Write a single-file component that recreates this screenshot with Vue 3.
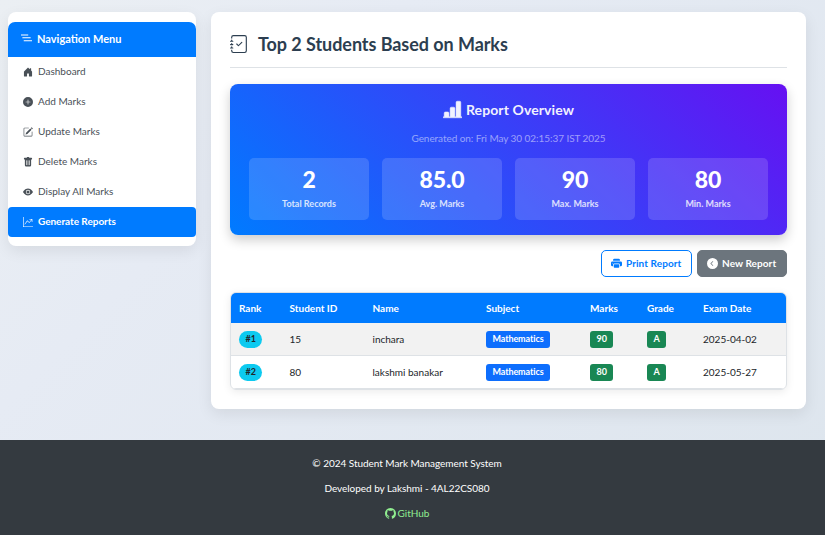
<script setup>
import { h } from 'vue'

const icons = {
  nested: ['M0 2h10.500v1.500H0zM2 6.200h12v1.500H2zM4 10.500h12V12H4z'],
  house: ['M6.5 14.5v-3.505c0-.245.25-.495.5-.495h2c.25 0 .5.25.5.5v3.5a.5.5 0 0 0 .5.5h4a.5.5 0 0 0 .5-.5v-7a.5.5 0 0 0-.146-.354L13 5.793V2.5a.5.5 0 0 0-.5-.5h-1a.5.5 0 0 0-.5.5v1.293L8.354 1.146a.5.5 0 0 0-.708 0l-6 6A.5.5 0 0 0 1.5 7.5v7a.5.5 0 0 0 .5.5h4a.5.5 0 0 0 .5-.5'],
  plus: ['M16 8A8 8 0 1 1 0 8a8 8 0 0 1 16 0M8.5 4.5a.5.5 0 0 0-1 0v3h-3a.5.5 0 0 0 0 1h3v3a.5.5 0 0 0 1 0v-3h3a.5.5 0 0 0 0-1h-3z'],
  pencil: ['M15.502 1.94a.5.5 0 0 1 0 .706L14.459 3.69l-2-2L13.502.646a.5.5 0 0 1 .707 0l1.293 1.293zm-1.75 2.456-2-2L4.939 9.21a.5.5 0 0 0-.121.196l-.805 2.414a.25.25 0 0 0 .316.316l2.414-.805a.5.5 0 0 0 .196-.12l6.813-6.814z', 'M1 13.5A1.5 1.5 0 0 0 2.5 15h11a1.5 1.5 0 0 0 1.5-1.5v-6a.5.5 0 0 0-1 0v6a.5.5 0 0 1-.5.5h-11a.5.5 0 0 1-.5-.5v-11a.5.5 0 0 1 .5-.5H9a.5.5 0 0 0 0-1H2.5A1.5 1.5 0 0 0 1 2.5z'],
  trash: ['M2.5 1a1 1 0 0 0-1 1v1a1 1 0 0 0 1 1H3v9a2 2 0 0 0 2 2h6a2 2 0 0 0 2-2V4h.5a1 1 0 0 0 1-1V2a1 1 0 0 0-1-1H10a1 1 0 0 0-1-1H7a1 1 0 0 0-1 1zm3 4a.5.5 0 0 1 .5.5v7a.5.5 0 0 1-1 0v-7a.5.5 0 0 1 .5-.5M8 5a.5.5 0 0 1 .5.5v7a.5.5 0 0 1-1 0v-7A.5.5 0 0 1 8 5m3 .5v7a.5.5 0 0 1-1 0v-7a.5.5 0 0 1 1 0'],
  eye: ['M10.5 8a2.5 2.5 0 1 1-5 0 2.500 2.500 0 0 1 5 0', 'M0 8s3-5.5 8-5.5S16 8 16 8s-3 5.5-8 5.5S0 8 0 8m8 3.5a3.5 3.5 0 1 0 0-7 3.5 3.5 0 0 0 0 7'],
  graph: ['M0 0h1v15h15v1H0zm10 3.5a.5.5 0 0 1 .5-.5h4a.5.5 0 0 1 .5.5v4a.5.5 0 0 1-1 0V4.9l-3.613 4.417a.5.5 0 0 1-.74.037L7.06 6.767l-3.656 5.027a.5.5 0 0 1-.808-.588l4-5.5a.5.5 0 0 1 .758-.06l2.609 2.61L13.445 4H10.5a.5.5 0 0 1-.5-.5'],
  bars: ['M11 2a1 1 0 0 1 1-1h2a1 1 0 0 1 1 1v12h.5a.5.5 0 0 1 0 1H.5a.5.5 0 0 1 0-1H1v-3a1 1 0 0 1 1-1h2a1 1 0 0 1 1 1v3h1V7a1 1 0 0 1 1-1h2a1 1 0 0 1 1 1v7h1z'],
  printer: ['M5 1a2 2 0 0 0-2 2v1h10V3a2 2 0 0 0-2-2zm6 8H5a1 1 0 0 0-1 1v3a1 1 0 0 0 1 1h6a1 1 0 0 0 1-1v-3a1 1 0 0 0-1-1', 'M0 7a2 2 0 0 1 2-2h12a2 2 0 0 1 2 2v3a2 2 0 0 1-2 2h-1v-2a2 2 0 0 0-2-2H5a2 2 0 0 0-2 2v2H2a2 2 0 0 1-2-2zm2.500 1a.5.5 0 1 0 0-1 .5.5 0 0 0 0 1'],
  back: ['M8 0a8 8 0 1 0 0 16A8 8 0 0 0 8 0M8.900 4.700a.5.5 0 0 1 0 .708L6.300 8l2.600 2.600a.5.5 0 0 1-.708.708L5.200 8.354a.5.5 0 0 1 0-.708L8.200 4.700a.5.5 0 0 1 .7 0'],
  journal: ['M10.854 6.146a.5.5 0 0 1 0 .708l-3 3a.5.5 0 0 1-.708 0l-1.5-1.5a.5.5 0 1 1 .708-.708L7.5 8.793l2.646-2.647a.5.5 0 0 1 .708 0', 'M3 0h10a2 2 0 0 1 2 2v12a2 2 0 0 1-2 2H3a2 2 0 0 1-2-2v-1h1v1a1 1 0 0 0 1 1h10a1 1 0 0 0 1-1V2a1 1 0 0 0-1-1H3a1 1 0 0 0-1 1v1H1V2a2 2 0 0 1 2-2', 'M1 5v-.5a.5.5 0 0 1 1 0V5h.5a.5.5 0 0 1 0 1h-2a.5.5 0 0 1 0-1zm0 3v-.5a.5.5 0 0 1 1 0V8h.5a.5.5 0 0 1 0 1h-2a.5.5 0 0 1 0-1zm0 3v-.5a.5.5 0 0 1 1 0v.5h.5a.5.5 0 0 1 0 1h-2a.5.5 0 0 1 0-1z'],
  github: ['M8 0C3.58 0 0 3.58 0 8c0 3.54 2.29 6.53 5.47 7.59.4.07.55-.17.55-.38 0-.19-.01-.82-.01-1.49-2.01.37-2.53-.49-2.69-.94-.09-.23-.48-.94-.82-1.13-.28-.15-.68-.52-.01-.53.63-.01 1.08.58 1.23.82.72 1.21 1.87.87 2.33.66.07-.52.28-.87.51-1.07-1.78-.2-3.64-.89-3.64-3.95 0-.87.31-1.59.82-2.15-.08-.2-.36-1.02.08-2.12 0 0 .67-.21 2.2.82.64-.18 1.32-.27 2-.27s1.36.09 2 .27c1.53-1.04 2.2-.82 2.2-.82.44 1.1.16 1.92.08 2.12.51.56.82 1.27.82 2.15 0 3.07-1.87 3.75-3.65 3.95.29.25.54.73.54 1.48 0 1.07-.01 1.93-.01 2.2 0 .21.15.46.55.38A8.01 8.01 0 0 0 16 8c0-4.420-3.580-8-8-8'],
}

const Icon = (props) =>
  h('svg', { viewBox: '0 0 16 16', fill: 'currentColor', 'aria-hidden': 'true' },
    icons[props.name].map((d) => h('path', { d })))
Icon.props = ['name']

const menu = [
  { icon: 'house', label: 'Dashboard' },
  { icon: 'plus', label: 'Add Marks' },
  { icon: 'pencil', label: 'Update Marks' },
  { icon: 'trash', label: 'Delete Marks' },
  { icon: 'eye', label: 'Display All Marks' },
  { icon: 'graph', label: 'Generate Reports', active: true },
]
const stats = [
  { value: '2', label: 'Total Records' },
  { value: '85.0', label: 'Avg. Marks' },
  { value: '90', label: 'Max. Marks' },
  { value: '80', label: 'Min. Marks' },
]
const columns = ['Rank', 'Student ID', 'Name', 'Subject', 'Marks', 'Grade', 'Exam Date']
const rows = [
  { rank: '#1', id: 15, name: 'inchara', subject: 'Mathematics', marks: 90, grade: 'A', date: '2025-04-02' },
  { rank: '#2', id: 80, name: 'lakshmi banakar', subject: 'Mathematics', marks: 80, grade: 'A', date: '2025-05-27' },
]
</script>

<template>
  <div class="page">
    <div class="layout">
      <aside class="sidebar">
        <div class="menu-title"><Icon name="nested" class="icon" /><span>Navigation Menu</span></div>
        <nav>
          <a v-for="m in menu" :key="m.label" class="menu-item" :class="{ active: m.active }">
            <Icon :name="m.icon" class="icon" /><span>{{ m.label }}</span>
          </a>
        </nav>
      </aside>

      <main class="content">
        <h2 class="title"><Icon name="journal" class="icon" /><span>Top 2 Students Based on Marks</span></h2>

        <section class="overview">
          <h4><Icon name="bars" class="icon" /><span>Report Overview</span></h4>
          <p class="generated">Generated on: Fri May 30 02:15:37 IST 2025</p>
          <div class="stats">
            <div v-for="s in stats" :key="s.label" class="stat">
              <strong>{{ s.value }}</strong>
              <span>{{ s.label }}</span>
            </div>
          </div>
        </section>

        <div class="actions">
          <button class="btn print"><Icon name="printer" class="icon" /><span>Print Report</span></button>
          <button class="btn new"><Icon name="back" class="icon" /><span>New Report</span></button>
        </div>

        <div class="table">
          <div class="row head">
            <span v-for="c in columns" :key="c">{{ c }}</span>
          </div>
          <div v-for="r in rows" :key="r.rank" class="row body">
            <span><b class="badge rank">{{ r.rank }}</b></span>
            <span>{{ r.id }}</span>
            <span>{{ r.name }}</span>
            <span><b class="badge subject">{{ r.subject }}</b></span>
            <span><b class="badge good">{{ r.marks }}</b></span>
            <span><b class="badge good">{{ r.grade }}</b></span>
            <span>{{ r.date }}</span>
          </div>
        </div>
      </main>
    </div>

    <footer class="footer">
      <p>© 2024 Student Mark Management System</p>
      <p>Developed by Lakshmi - 4AL22CS080</p>
      <p><a class="github"><Icon name="github" class="icon" /><span>GitHub</span></a></p>
    </footer>
  </div>
</template>

<style>
body { margin: 0; overflow: hidden; }
</style>

<style scoped>
* { box-sizing: border-box; }
.page {
  height: 535px;
  display: flex;
  flex-direction: column;
  font-family: Lato, "Liberation Sans", sans-serif;
  font-size: 10px;
  line-height: 15px;
  color: #212529;
  background: linear-gradient(135deg, #ebeff3 0%, #e6ebf4 30%, #dde5ed 100%);
}
.icon { display: block; flex: none; width: 10px; height: 10px; }
.layout {
  height: 440px;
  flex: none;
  display: flex;
  align-items: flex-start;
  gap: 15px;
  padding: 12px 19px 0 8px;
}
.sidebar {
  width: 188px;
  height: 234px;
  padding-top: 10px;
  background: #fff;
  border-radius: 8px;
  box-shadow: 0 5px 15px rgba(0, 0, 0, 0.08);
}
.menu-title {
  height: 35px;
  display: flex;
  align-items: center;
  gap: 5px;
  padding: 0 0 2px 13px;
  background: #007bff;
  color: #fff;
  font-size: 11px;
  font-weight: 700;
  border-radius: 7px 7px 0 0;
}
.menu-title .icon { width: 11px; height: 11px; }
.menu-item {
  height: 30px;
  display: flex;
  align-items: center;
  gap: 5px;
  padding: 0 0 2px 15px;
  color: #495057;
}
.menu-item .icon { margin-top: 2px; }
.menu-item.active {
  background: #007bff;
  color: #fff;
  font-weight: 700;
  letter-spacing: -0.03px;
  border-radius: 4px;
}
.content {
  width: 595px;
  height: 397px;
  padding: 19px;
  background: #fff;
  border-radius: 8px;
  box-shadow: 0 5px 15px rgba(0, 0, 0, 0.08);
}
.title {
  height: 37px;
  display: flex;
  align-items: flex-start;
  gap: 10px;
  margin: 0 0 16px;
  border-bottom: 1px solid #dee2e6;
  color: #2c3e50;
  font-size: 18px;
  line-height: 26px;
  letter-spacing: -0.06px;
  font-weight: 700;
}
.title .icon { width: 18px; height: 18px; margin-top: 4px; }
.overview {
  height: 151px;
  padding: 16px 19px 15px;
  border-radius: 8px;
  background: linear-gradient(45deg, #007bff, #6610f2);
  box-shadow: 0 5px 12px rgba(0, 0, 0, 0.2);
  color: #fff;
}
.overview h4 {
  display: flex;
  justify-content: center;
  align-items: center;
  gap: 4px;
  margin: 0;
  height: 19px;
  font-size: 14px;
  line-height: 19px;
  letter-spacing: 0.1px;
  opacity: 0.93;
}
.overview h4 .icon { width: 19px; height: 19px; }
.overview h4 .icon { stroke: currentColor; stroke-width: 0.4; }
.generated {
  margin: 12px 0;
  text-align: center;
  line-height: 15px;
  letter-spacing: -0.06px;
  color: rgba(255, 255, 255, 0.5);
}
.stats { display: grid; grid-template-columns: repeat(4, 1fr); gap: 13px; }
.stat {
  height: 62px;
  display: flex;
  flex-direction: column;
  align-items: center;
  padding-top: 8px;
  border-radius: 5px;
  background: rgba(255, 255, 255, 0.15);
}
.stat strong { font-size: 23px; line-height: 27px; font-weight: 900; letter-spacing: -0.1px; }
.stat span { margin-top: 4px; font-size: 9px; line-height: 13px; font-weight: 700; opacity: 0.8; }
.actions { display: flex; justify-content: flex-end; gap: 5px; margin: 15px 0; height: 27px; }
.btn {
  display: flex;
  align-items: center;
  gap: 4px;
  padding: 0 9px;
  border: 1px solid #007bff;
  border-radius: 5px;
  font: 700 10px/15px Lato, sans-serif;
}
.btn .icon { width: 11px; height: 11px; }
.print { width: 91px; background: #fff; color: #007bff; letter-spacing: 0.08px; }
.new { width: 90px; background: #6c757d; border-color: #6c757d; color: #fff; letter-spacing: 0.08px; }
.table {
  height: 98px;
  overflow: hidden;
  border: 1px solid #dee2e6;
  border-radius: 6px;
  box-shadow: 0 2px 8px rgba(0, 0, 0, 0.08);
}
.row {
  display: grid;
  grid-template-columns: 50.500px 83px 113.500px 104px 57px 56px 1fr;
  align-items: center;
  height: 33px;
  padding-left: 8px;
  border-bottom: 1px solid #dee2e6;
}
.row.head { height: 30px; background: #007bff; color: #fff; font-weight: 700; border: 0; }
.row.body:nth-child(2) { background: #f2f2f2; }
.badge {
  display: inline-block;
  vertical-align: middle;
  height: 17px;
  padding: 0 6.500px;
  border-radius: 3px;
  font-size: 9px;
  line-height: 16px;
  color: #fff;
}
.rank { border-radius: 9px; background: #0dcaf0; color: #212529; }
.subject { background: #0d6efd; letter-spacing: -0.1px; }
.good { background: #198754; }
.footer {
  flex: 1;
  padding: 16px 11px 0 0;
  background: #343a40;
  color: #fff;
  text-align: center;
  letter-spacing: -0.04px;
}
.footer p { margin: 0 0 10px; }
.github { display: flex; justify-content: center; align-items: center; gap: 2px; color: #90ee90; letter-spacing: 0; }
.github .icon { width: 11px; height: 11px; }
</style>
